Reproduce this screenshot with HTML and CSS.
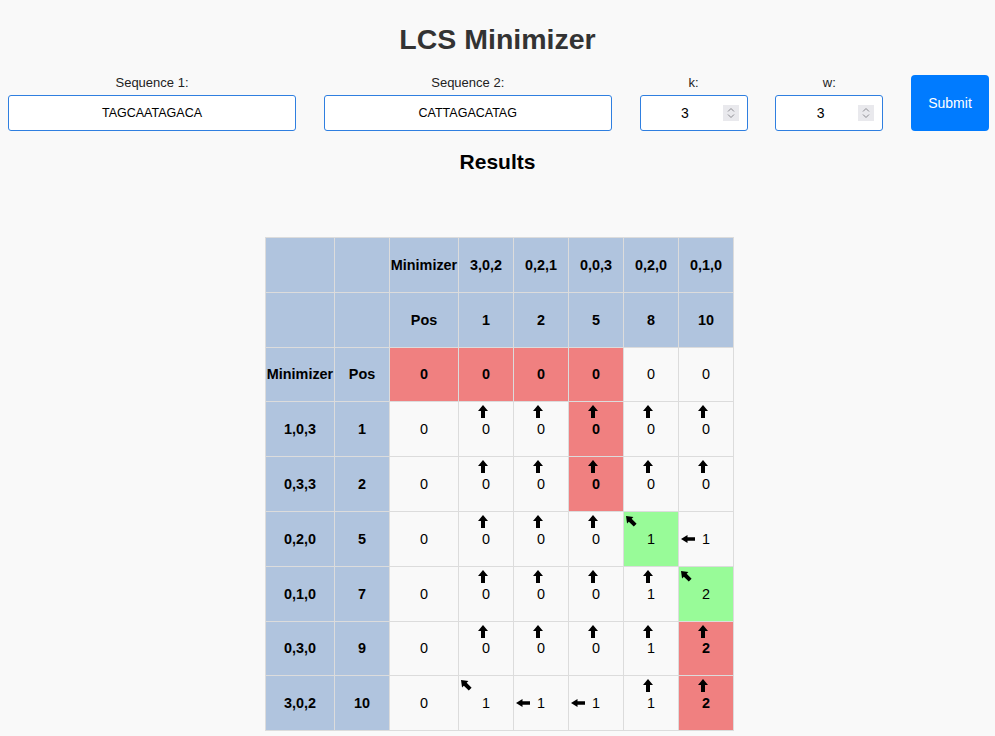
FILE: index.html
```html
<!DOCTYPE html>
<html>
<head>
<meta charset="utf-8">
<title>LCS Minimizer</title>
<link rel="stylesheet" href="styles.css">
</head>
<body>
<h1 class="title">LCS Minimizer</h1>
<form class="form-row">
  <div class="field seq">
    <label class="lbl">Sequence 1:</label>
    <input class="inp" type="text" value="TAGCAATAGACA">
  </div>
  <div class="field seq">
    <label class="lbl">Sequence 2:</label>
    <input class="inp" type="text" value="CATTAGACATAG">
  </div>
  <div class="field num">
    <label class="lbl">k:</label>
    <div class="num-wrap">
      <input class="inp inp-num" type="text" value="3">
      <span class="spin"><svg width="8" height="12" viewBox="0 0 8 12"><path d="M1 4.5 L4 1.5 L7 4.5 M1 7.5 L4 10.5 L7 7.5" fill="none" stroke="#8a8a90" stroke-width="1"/></svg></span>
    </div>
  </div>
  <div class="field num">
    <label class="lbl">w:</label>
    <div class="num-wrap">
      <input class="inp inp-num" type="text" value="3">
      <span class="spin"><svg width="8" height="12" viewBox="0 0 8 12"><path d="M1 4.5 L4 1.5 L7 4.5 M1 7.5 L4 10.5 L7 7.5" fill="none" stroke="#8a8a90" stroke-width="1"/></svg></span>
    </div>
  </div>
  <button class="submit" type="button">Submit</button>
</form>
<h2 class="results">Results</h2>
<table class="grid">
  <colgroup>
    <col class="c-wide"><col class="c-nar"><col class="c-wide"><col class="c-nar"><col class="c-nar"><col class="c-nar"><col class="c-nar"><col class="c-nar">
  </colgroup>
  <tbody id="grid"></tbody>
</table>
<script src="app.js"></script>
</body>
</html>
```
FILE: app.js
```js
(function () {
  var UP = '<svg class="ar ar-up" width="10" height="13" viewBox="0 0 10 13"><polygon points="5,0 10,6 7,6 7,13 3,13 3,6 0,6" fill="#000"/></svg>';
  var LEFT = '<svg class="ar ar-left" width="14" height="8" viewBox="0 0 14 8"><polygon points="0,4 6.5,0 6.5,2.3 14,2.3 14,5.7 6.5,5.7 6.5,8" fill="#000"/></svg>';
  var DIAG = '<svg class="ar ar-diag" width="13" height="13" viewBox="0 0 13 13"><polygon points="1,1 8.42,2.06 6.65,3.83 11.6,8.78 8.78,11.6 3.83,6.65 2.06,8.42" fill="#000"/></svg>';
  var rows = [
    [['Minimizer','',''],['Pos','',''],['0','','r'],['0','','r'],['0','','r'],['0','','r'],['0','',''],['0','','']],
    [['1,0,3'],['1'],['0','',''],['0','u',''],['0','u',''],['0','u','r'],['0','u',''],['0','u','']],
    [['0,3,3'],['2'],['0','',''],['0','u',''],['0','u',''],['0','u','r'],['0','u',''],['0','u','']],
    [['0,2,0'],['5'],['0','',''],['0','u',''],['0','u',''],['0','u',''],['1','d','g'],['1','l','']],
    [['0,1,0'],['7'],['0','',''],['0','u',''],['0','u',''],['0','u',''],['1','u',''],['2','d','g']],
    [['0,3,0'],['9'],['0','',''],['0','u',''],['0','u',''],['0','u',''],['1','u',''],['2','u','r']],
    [['3,0,2'],['10'],['0','',''],['1','d',''],['1','l',''],['1','l',''],['1','u',''],['2','u','r']]
  ];
  var head1 = ['', '', 'Minimizer', '3,0,2', '0,2,1', '0,0,3', '0,2,0', '0,1,0'];
  var head2 = ['', '', 'Pos', '1', '2', '5', '8', '10'];
  var html = '';
  [head1, head2].forEach(function (r) {
    html += '<tr>' + r.map(function (t) { return '<td class="hd">' + t + '</td>'; }).join('') + '</tr>';
  });
  rows.forEach(function (r) {
    html += '<tr>';
    r.forEach(function (c, i) {
      if (i < 2) { html += '<td class="hd">' + c[0] + '</td>'; return; }
      var cls = 'cell' + (c[2] === 'r' ? ' red' : c[2] === 'g' ? ' green' : '');
      var a = c[1] === 'u' ? UP : c[1] === 'l' ? LEFT : c[1] === 'd' ? DIAG : '';
      html += '<td class="' + cls + '">' + a + c[0] + '</td>';
    });
    html += '</tr>';
  });
  document.getElementById('grid').innerHTML = html;
})();
```
FILE: styles.css
```css
html, body {
  margin: 0;
  padding: 0;
  background: #f9f9f9;
  font-family: "Liberation Sans", Arial, sans-serif;
  color: #000;
}
.title {
  margin: 23px 0 0;
  font-size: 28.5px;
  line-height: 32px;
  font-weight: bold;
  color: #333;
  text-align: center;
}
.form-row {
  display: flex;
  justify-content: space-between;
  align-items: flex-end;
  padding: 0 6px 0 8px;
  margin: 20px 0 0;
}
.field {
  display: flex;
  flex-direction: column;
}
.seq { width: 288px; }
.num { width: 108px; }
.lbl {
  display: block;
  text-align: center;
  font-size: 13px;
  line-height: 16px;
  color: #222;
  margin-bottom: 4px;
}
.inp {
  box-sizing: border-box;
  width: 100%;
  height: 36px;
  margin: 0;
  border: 1px solid #2f7fe0;
  border-radius: 3px;
  background: #fff;
  font-family: "Liberation Sans", Arial, sans-serif;
  font-size: 12.5px;
  color: #000;
  text-align: center;
  padding: 0 4px;
  outline: none;
}
.num-wrap {
  position: relative;
}
.inp-num {
  font-size: 14px;
  padding: 0 17px 0 0;
}
.spin {
  position: absolute;
  right: 9px;
  top: 10px;
  width: 16px;
  height: 16px;
  background: #e9e9ed;
  display: flex;
  align-items: center;
  justify-content: center;
}
.submit {
  width: 78px;
  height: 56px;
  border: none;
  border-radius: 4px;
  background: #007bff;
  color: #fff;
  font-family: "Liberation Sans", Arial, sans-serif;
  font-size: 14px;
  padding: 0;
}
.results {
  margin: 19px 0 0;
  font-size: 21px;
  line-height: 24px;
  font-weight: bold;
  text-align: center;
}
.grid {
  margin: 63px 0 0 265px;
  border-collapse: collapse;
  table-layout: fixed;
  width: 468px;
  font-size: 14.4px;
}
.c-wide { width: 69px; }
.c-nar { width: 55px; }
.grid td {
  border: 1px solid #dcdcdc;
  height: 53.8px;
  padding: 0;
  text-align: center;
  vertical-align: middle;
  position: relative;
  white-space: nowrap;
}
.grid td.hd {
  background: #b0c4de;
  font-weight: bold;
}
.grid td.cell {
  background: #f9f9f9;
}
.grid td.red {
  background: #f08080;
  font-weight: bold;
}
.grid td.green {
  background: #98fb98;
}
.ar {
  position: absolute;
  display: block;
}
.ar-up {
  left: calc(50% - 8px);
  top: 3px;
}
.ar-left {
  left: 2px;
  top: calc(50% - 4px);
}
.ar-diag {
  left: 1px;
  top: 3px;
}
```
